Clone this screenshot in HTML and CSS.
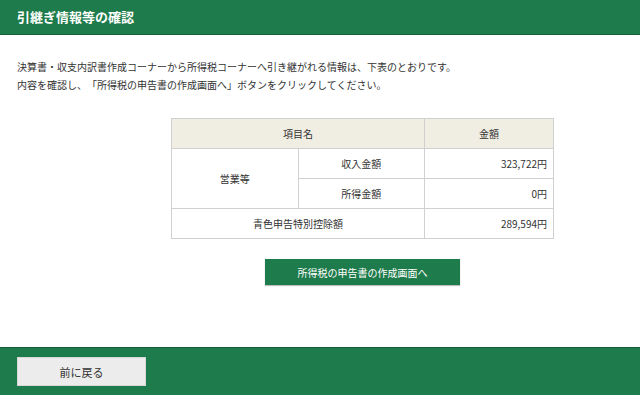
FILE: index.html
```html
<!DOCTYPE html>
<html lang="ja">
<head>
	<meta charset="UTF-8">
	<title>引継ぎ情報等の確認</title>
	<link rel="stylesheet" href="styles.css">
</head>
<body>
	<div class="page">
		<div class="m-header">
			<h1>引継ぎ情報等の確認</h1>
		</div>
		<div class="m-main">
			<p class="lead">決算書・収支内訳書作成コーナーから所得税コーナーへ引き継がれる情報は、下表のとおりです。<br>内容を確認し、「所得税の申告書の作成画面へ」ボタンをクリックしてください。</p>
			<div class="content">
				<table class="m-table">
					<tr>
						<th colspan="2">項目名</th>
						<th>金額</th>
					</tr>
					<tr>
						<td rowspan="2" class="label">営業等</td>
						<td class="label sub">収入金額</td>
						<td class="num sub">323,722円</td>
					</tr>
					<tr>
						<td class="label">所得金額</td>
						<td class="num">0円</td>
					</tr>
					<tr>
						<td colspan="2" class="label">青色申告特別控除額</td>
						<td class="num">289,594円</td>
					</tr>
				</table>
				<div class="actions">
					<button class="btn-next">所得税の申告書の作成画面へ</button>
				</div>
			</div>
		</div>
		<div class="m-footer">
			<button class="btn-back">前に戻る</button>
		</div>
	</div>
</body>
</html>
```
FILE: styles.css
```css
html, body {
	margin: 0;
	padding: 0;
}
body {
	font-family: "Noto Sans CJK JP", "Liberation Sans", sans-serif;
	font-size: 10px;
	color: #333;
	background: #fff;
	text-spacing-trim: space-all;
}
.page {
	display: flex;
	flex-direction: column;
	min-height: 395px;
}
.m-header {
	height: 34px;
	background-color: #1e7b4b;
	border-bottom: 1px solid #15603a;
	padding-left: 17px;
	display: flex;
	align-items: center;
}
.m-header h1 {
	margin: 0;
	font-size: 13px;
	font-weight: bold;
	color: #fff;
	line-height: 20px;
}
.m-main {
	padding: 23px 17px 0;
}
.lead {
	margin: 0;
	line-height: 18px;
}
.content {
	width: 383px;
	margin: 24px 0 0 154px;
}
.m-table {
	width: 383px;
	border-collapse: collapse;
	table-layout: fixed;
}
.m-table th,
.m-table td {
	border: 1px solid #d0d0d0;
	height: 29px;
	padding: 0 6px;
	font-weight: normal;
	text-align: center;
}
.m-table th {
	background-color: #f0ede3;
}
.m-table th:first-child {
	width: 240px;
}
.m-table td.num {
	text-align: right;
}
.m-table td.sub {
	border-bottom: 1px dashed #ddd;
}
.actions {
	display: flex;
	justify-content: center;
	margin-top: 20px;
}
.btn-next {
	width: 195px;
	height: 26px;
	border: none;
	background-color: #1e7b4b;
	color: #fff;
	font-family: inherit;
	font-size: 10px;
	box-shadow: 0 1px 1px rgba(0, 0, 0, 0.25);
	cursor: pointer;
}
.m-footer {
	margin-top: auto;
	height: 47px;
	background-color: #1e7b4b;
	border-top: 1px solid #15603a;
	padding-left: 17px;
	display: flex;
	align-items: center;
}
.btn-back {
	width: 129px;
	height: 29px;
	border: 1px solid #d8d8d8;
	background-color: #ececec;
	color: #333;
	font-family: inherit;
	font-size: 11px;
	cursor: pointer;
}
```
